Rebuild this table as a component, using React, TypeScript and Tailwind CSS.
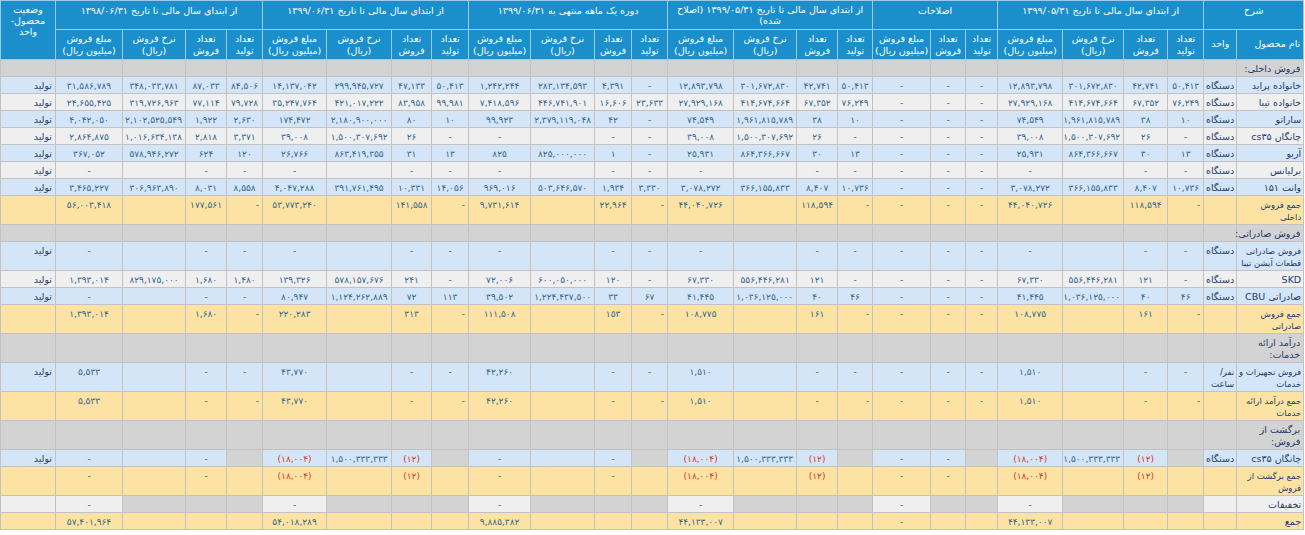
import React from 'react';

const fa = (s: string) => s.replace(/[0-9]/g, (d) => '۰۱۲۳۴۵۶۷۸۹'[Number(d)]);

type Cell = string | null;
type Row =
  | { t: 'section'; name: string }
  | { t: 'blue' | 'light' | 'yellow' | 'disc'; c: Cell[] };

const rows: Row[] = [
  { t: 'section', name: 'فروش داخلی:' },
  { t: 'blue', c: ['خانواده پراید', 'دستگاه', '50,413', '42,741', '301,672,830', '12,893,798', '-', '-', '-', '50,413', '42,741', '301,672,830', '12,893,798', '-', '4,391', '283,134,593', '1,242,244', '50,413', '47,133', '299,945,727', '14,137,042', '84,506', '87,033', '348,033,781', '31,586,789', 'تولید'] },
  { t: 'light', c: ['خانواده تیبا', 'دستگاه', '76,249', '67,352', '414,674,664', '27,929,168', '-', '-', '-', '76,249', '67,352', '414,674,664', '27,929,168', '23,633', '16,606', '446,741,901', '7,418,596', '99,981', '83,958', '421,017,222', '35,247,764', '79,728', '77,114', '319,726,963', '24,655,425', 'تولید'] },
  { t: 'blue', c: ['ساراتو', 'دستگاه', '10', '38', '1,961,815,789', '74,549', '-', '-', '-', '10', '38', '1,961,815,789', '74,549', '-', '42', '2,379,119,048', '99,923', '10', '80', '2,180,900,000', '174,472', '2,630', '1,922', '2,102,525,549', '4,042,050', 'تولید'] },
  { t: 'light', c: ['چانگان cs35', 'دستگاه', '-', '26', '1,500,307,692', '39,008', '-', '-', '-', '-', '26', '1,500,307,692', '39,008', '-', '-', '', '-', '-', '26', '1,500,307,692', '39,008', '3,371', '2,818', '1,016,634,138', '2,864,875', 'تولید'] },
  { t: 'blue', c: ['آریو', 'دستگاه', '13', '30', '864,366,667', '25,931', '-', '-', '-', '13', '30', '864,366,667', '25,931', '-', '1', '825,000,000', '825', '13', '31', '863,419,355', '26,766', '120', '624', '578,946,272', '367,052', 'تولید'] },
  { t: 'light', c: ['برلیانس', 'دستگاه', '-', '-', '', '-', '-', '-', '-', '-', '-', '', '-', '-', '-', '', '-', '-', '-', '', '-', '-', '-', '', '-', 'تولید'] },
  { t: 'blue', c: ['وانت 151', 'دستگاه', '10,736', '8,407', '366,155,833', '3,078,272', '-', '-', '-', '10,736', '8,407', '366,155,833', '3,078,272', '3,330', '1,934', '503,646,570', '969,016', '14,056', '10,331', '391,761,495', '4,047,288', '8,558', '8,031', '306,963,890', '3,465,227', 'تولید'] },
  { t: 'yellow', c: ['جمع فروش\nداخلی', '', '-', '118,594', '', '44,040,726', '-', '-', '-', '-', '118,594', '', '44,040,726', '-', '22,964', '', '9,731,614', '-', '141,558', '', '53,773,240', '-', '177,561', '', '56,003,418', ''] },
  { t: 'section', name: 'فروش صادراتی:' },
  { t: 'blue', c: ['فروش صادراتی\nقطعات آیشن تیبا', 'دستگاه', '-', '-', '', '-', '-', '-', '-', '-', '-', '', '-', '-', '-', '', '-', '-', '-', '', '-', '-', '-', '', '-', 'تولید'] },
  { t: 'light', c: ['SKD', 'دستگاه', '-', '121', '556,446,281', '67,330', '-', '-', '-', '-', '121', '556,446,281', '67,330', '-', '120', '600,050,000', '72,006', '-', '241', '578,157,676', '139,326', '1,480', '1,680', '829,175,000', '1,393,014', 'تولید'] },
  { t: 'blue', c: ['صادراتی CBU', 'دستگاه', '46', '40', '1,036,125,000', '41,445', '-', '-', '-', '46', '40', '1,036,125,000', '41,445', '67', '33', '1,224,437,500', '39,502', '113', '72', '1,124,262,889', '80,947', '-', '-', '', '-', 'تولید'] },
  { t: 'yellow', c: ['جمع فروش\nصادراتی', '', '-', '161', '', '108,775', '-', '-', '-', '-', '161', '', '108,775', '-', '153', '', '111,508', '-', '313', '', '220,283', '-', '1,680', '', '1,393,014', ''] },
  { t: 'section', name: 'درآمد ارائه\nخدمات:' },
  { t: 'blue', c: ['فروش تجهیزات و\nخدمات', 'نفر/\nساعت', '-', '-', '', '1,510', '-', '-', '-', '-', '-', '', '1,510', '-', '-', '', '42,260', '-', '-', '', '43,770', '-', '-', '', '5,533', 'تولید'] },
  { t: 'yellow', c: ['جمع درآمد ارائه\nخدمات', '', '-', '-', '', '1,510', '-', '-', '-', '-', '-', '', '1,510', '-', '-', '', '42,260', '-', '-', '', '43,770', '-', '-', '', '5,533', ''] },
  { t: 'section', name: 'برگشت از\nفروش:' },
  { t: 'blue', c: ['چانگان cs35', 'دستگاه', null, '(12)', '1,500,333,333', '(18,004)', null, '-', '-', null, '(12)', '1,500,333,333', '(18,004)', null, '-', '', '-', null, '(12)', '1,500,333,333', '(18,004)', null, '-', '', '-', 'تولید'] },
  { t: 'yellow', c: ['جمع برگشت از\nفروش', '', '', '(12)', '', '(18,004)', '', '-', '-', '', '(12)', '', '(18,004)', '', '-', '', '-', '', '(12)', '', '(18,004)', '', '-', '', '-', ''] },
  { t: 'disc', c: ['تخفیفات', '', null, null, null, '-', null, null, '-', null, null, null, '-', null, null, null, '-', null, null, null, '-', null, null, null, '-', ''] },
  { t: 'yellow', c: ['جمع', '', '', '', '', '44,133,007', '', '', '-', '', '', '', '44,133,007', '', '', '', '9,885,382', '', '', '', '54,018,289', '', '', '', '57,401,964', ''] },
];

const bgMap: Record<string, string> = {
  blue: 'bg-[#d3e5f6]',
  light: 'bg-[#efefef]',
  yellow: 'bg-[#fde3a3]',
  disc: 'bg-[#efefef]',
};

const tolCols = new Set([2, 9, 13, 17, 21]);

const hd = 'border border-[#9ccbe6] bg-[#1a8fcc] text-white font-normal text-center px-[1px] whitespace-nowrap text-[9.5px]';

function SubHead({ four }: { four: boolean }) {
  return (
    <>
      <th className={`${hd} align-middle leading-[12px] py-[2px]`}>تعداد<br />تولید</th>
      <th className={`${hd} align-middle leading-[12px] py-[2px]`}>تعداد<br />فروش</th>
      {four && <th className={`${hd} align-middle leading-[12px] py-[2px]`}>نرخ فروش<br />(ریال)</th>}
      <th className={`${hd} align-middle leading-[12px] py-[2px]`}>مبلغ فروش<br />(میلیون ریال)</th>
    </>
  );
}

export default function App() {
  return (
    <div className="bg-white w-[1305px] h-[535px] overflow-hidden">
      <table dir="rtl" className="table-fixed border-collapse w-[1303px] font-['DejaVu_Sans',sans-serif] text-[10px]">
        <colgroup>
          <col className="w-[67px]" />
          <col className="w-[33px]" />
          <col className="w-[36px]" />
          <col className="w-[44px]" />
          <col className="w-[61px]" />
          <col className="w-[65px]" />
          <col className="w-[32px]" />
          <col className="w-[35px]" />
          <col className="w-[58px]" />
          <col className="w-[35px]" />
          <col className="w-[41px]" />
          <col className="w-[63px]" />
          <col className="w-[66px]" />
          <col className="w-[36px]" />
          <col className="w-[37px]" />
          <col className="w-[64px]" />
          <col className="w-[62px]" />
          <col className="w-[37px]" />
          <col className="w-[40px]" />
          <col className="w-[65px]" />
          <col className="w-[64px]" />
          <col className="w-[36px]" />
          <col className="w-[41px]" />
          <col className="w-[63px]" />
          <col className="w-[67px]" />
          <col className="w-[55px]" />
        </colgroup>
        <thead>
          <tr className="h-[29px]">
            <th colSpan={2} className={`${hd} align-top leading-[11px] pt-[4px]`}>شرح</th>
            <th colSpan={4} className={`${hd} align-top leading-[11px] pt-[4px]`}>{fa('از ابتدای سال مالی تا تاریخ 1399/05/31')}</th>
            <th colSpan={3} className={`${hd} align-top leading-[11px] pt-[4px]`}>اصلاحات</th>
            <th colSpan={4} className={`${hd} align-top leading-[11px] pt-[3px]`}>{fa('از ابتدای سال مالی تا تاریخ 1399/05/31 (اصلاح')}<br />شده)</th>
            <th colSpan={4} className={`${hd} align-top leading-[11px] pt-[4px]`}>{fa('دوره یک ماهه منتهی به 1399/06/31')}</th>
            <th colSpan={4} className={`${hd} align-top leading-[11px] pt-[4px]`}>{fa('از ابتدای سال مالی تا تاریخ 1399/06/31')}</th>
            <th colSpan={4} className={`${hd} align-top leading-[11px] pt-[4px]`}>{fa('از ابتدای سال مالی تا تاریخ 1398/06/31')}</th>
            <th rowSpan={2} className={`${hd} align-top leading-[11px] pt-[3px]`}>وضعیت<br />محصول-<br />واحد</th>
          </tr>
          <tr className="h-[30px]">
            <th className={`${hd} align-middle text-right px-[3px]`}>نام محصول</th>
            <th className={`${hd} align-middle`}>واحد</th>
            <SubHead four />
            <SubHead four={false} />
            <SubHead four />
            <SubHead four />
            <SubHead four />
            <SubHead four />
          </tr>
        </thead>
        <tbody>
          {rows.map((row, ri) => {
            if (row.t === 'section') {
              return (
                <tr key={ri}>
                  <td className="border border-[#c2c2c2] bg-[#d3d3d3] text-right align-top px-[3px] pt-[3px] pb-[1px] leading-[12px] whitespace-pre text-[9.5px] text-[#1e3c6e]">
                    {row.name}
                  </td>
                  {Array.from({ length: 25 }).map((_, i) => (
                    <td key={i} className="border border-[#c2c2c2] bg-[#d3d3d3]" />
                  ))}
                </tr>
              );
            }
            return (
              <tr key={ri}>
                {row.c.map((v, i) => {
                  const gray = v === null;
                  const bg = gray ? 'bg-[#d3d3d3]' : bgMap[row.t];
                  let align = 'text-center';
                  if (i === 0 || i === 1 || i === 25) align = 'text-right';
                  else if (row.t === 'yellow' && tolCols.has(i)) align = 'text-right';
                  const red = !!v && v.startsWith('(');
                  const isText = i <= 1 || i === 25;
                  const color = red ? 'text-[#e0342c]' : isText ? 'text-[#1e3c6e]' : 'text-[#33658f]';
                  const size = isText ? (v && v.includes('\n') ? 'text-[8.5px]' : 'text-[9.5px]') : 'text-[9px]';
                  const px = i <= 1 ? 'pr-[2px] pl-[1px]' : 'px-[3px]';
                  return (
                    <td
                      key={i}
                      className={`border border-[#c2c2c2] ${bg} ${align} ${color} ${size} ${px} align-top pt-[3px] pb-[1px] leading-[12px] whitespace-pre`}
                    >
                      {v ? fa(v) : ''}
                    </td>
                  );
                })}
              </tr>
            );
          })}
        </tbody>
      </table>
    </div>
  );
}
